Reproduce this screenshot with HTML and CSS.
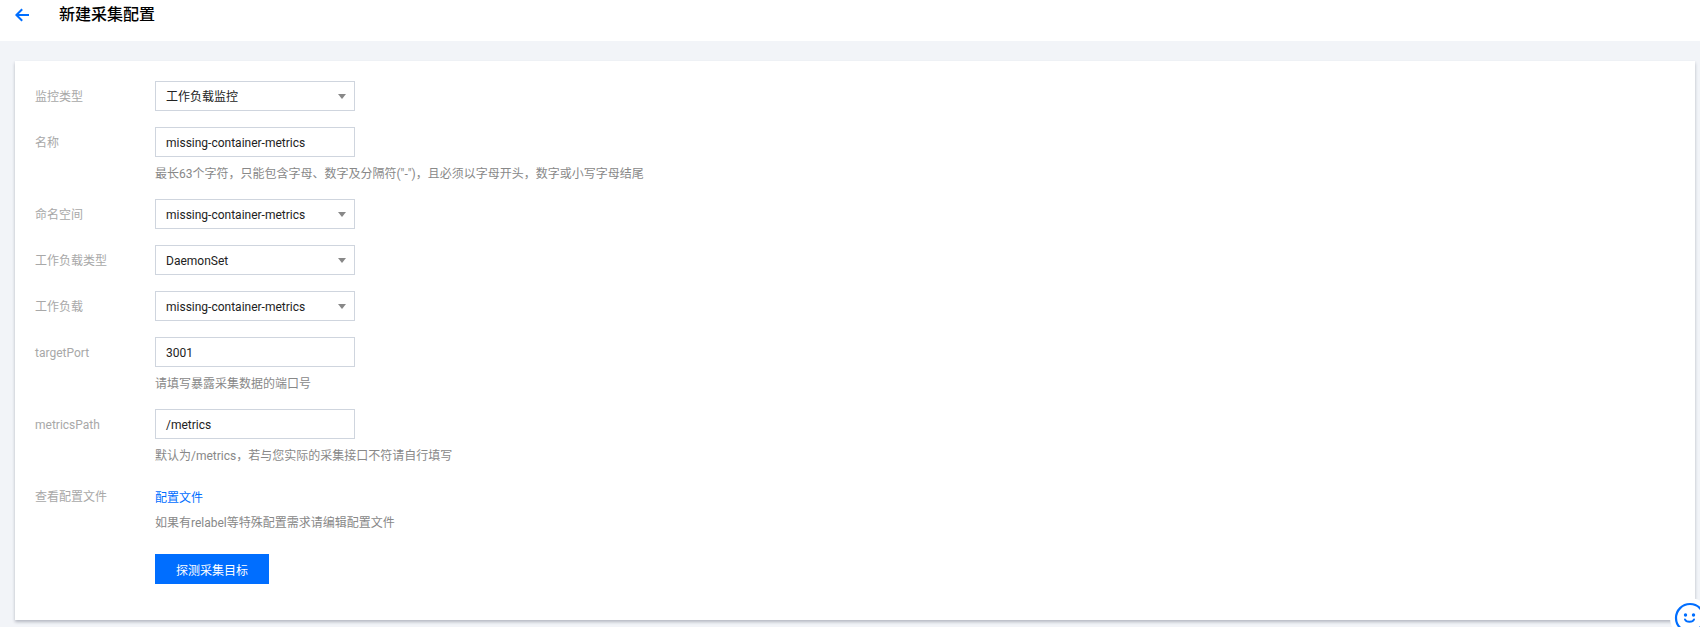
FILE: index.html
```html
<!DOCTYPE html>
<html lang="zh-CN">
<head>
<meta charset="utf-8">
<title>新建采集配置</title>
<link rel="stylesheet" href="styles.css">
</head>
<body>
<header class="topbar">
  <svg class="back" width="16" height="14" viewBox="0 0 16 14" aria-hidden="true"><path d="M14 7H1.5M7.2 1.2 1.4 7l5.8 5.8" fill="none" stroke="#006eff" stroke-width="2"/></svg>
  <h1 class="title">新建采集配置</h1>
</header>
<main class="content">
  <form class="card">
    <div class="row">
      <label class="label">监控类型</label>
      <div class="field"><div class="control select">工作负载监控<i class="caret"></i></div></div>
    </div>
    <div class="row">
      <label class="label">名称</label>
      <div class="field">
        <div class="control">missing-container-metrics</div>
        <p class="help">最长63个字符，只能包含字母、数字及分隔符("-")，且必须以字母开头，数字或小写字母结尾</p>
      </div>
    </div>
    <div class="row">
      <label class="label">命名空间</label>
      <div class="field"><div class="control select">missing-container-metrics<i class="caret"></i></div></div>
    </div>
    <div class="row">
      <label class="label">工作负载类型</label>
      <div class="field"><div class="control select">DaemonSet<i class="caret"></i></div></div>
    </div>
    <div class="row">
      <label class="label">工作负载</label>
      <div class="field"><div class="control select">missing-container-metrics<i class="caret"></i></div></div>
    </div>
    <div class="row">
      <label class="label">targetPort</label>
      <div class="field">
        <div class="control">3001</div>
        <p class="help">请填写暴露采集数据的端口号</p>
      </div>
    </div>
    <div class="row">
      <label class="label">metricsPath</label>
      <div class="field">
        <div class="control">/metrics</div>
        <p class="help">默认为/metrics，若与您实际的采集接口不符请自行填写</p>
      </div>
    </div>
    <div class="row">
      <label class="label">查看配置文件</label>
      <div class="field">
        <a class="link" href="#">配置文件</a>
        <p class="help help-tight">如果有relabel等特殊配置需求请编辑配置文件</p>
      </div>
    </div>
    <div class="row row-action">
      <span class="label"></span>
      <div class="field"><button class="btn" type="button">探测采集目标</button></div>
    </div>
  </form>
</main>
<div class="feedback">
  <svg width="32" height="32" viewBox="0 0 32 32" aria-hidden="true">
    <circle cx="16" cy="16" r="14" fill="#fff" stroke="#006eff" stroke-width="2.2"/>
    <circle cx="11.5" cy="13" r="1.7" fill="#006eff"/>
    <circle cx="19.5" cy="13" r="1.7" fill="#006eff"/>
    <path d="M11 17.5c1.2 3 7.8 3 9 0" fill="none" stroke="#006eff" stroke-width="2" stroke-linecap="round"/>
  </svg>
</div>
</body>
</html>
```
FILE: styles.css
```css
* { box-sizing: border-box; }
html, body { height: 100%; }
body {
  margin: 0;
  overflow: hidden;
  background: #f2f4f8;
  font-family: Roboto, "Noto Sans CJK SC", sans-serif;
  font-size: 12px;
  color: #000;
}
.topbar {
  display: flex;
  align-items: flex-start;
  height: 41px;
  padding: 8px 0 0 15px;
  background: #fff;
}
.back { flex: none; display: block; }
.title {
  margin: -5px 0 0 28px;
  font-size: 16px;
  font-weight: 500;
  line-height: 24px;
}
.content { padding: 20px 5px 0 15px; }
.card {
  display: flex;
  flex-direction: column;
  gap: 16px;
  padding: 20px 20px 36px;
  background: #fff;
  box-shadow: 0 2px 3px 0 rgba(54, 58, 80, .32);
}
.row { display: flex; }
.row-action { margin-top: 7px; }
.label {
  flex: none;
  width: 120px;
  height: 30px;
  padding-top: 1px;
  line-height: 30px;
  color: #a8a8a8;
}
.field { flex: 1; }
.control {
  position: relative;
  width: 200px;
  height: 30px;
  padding: 1px 10px 0;
  border: 1px solid #cfd5de;
  line-height: 28px;
  color: #222;
  background: #fff;
}
.caret {
  position: absolute;
  top: 12px;
  right: 8px;
  border-style: solid;
  border-width: 5px 4px 0;
  border-color: #888 transparent transparent;
}
.help {
  margin: 7px 0 -1px;
  line-height: 20px;
  color: #888;
}
.help-tight { margin: 0 0 -2px; }
.link {
  display: block;
  margin-top: 2px;
  line-height: 30px;
  color: #006eff;
  text-decoration: none;
}
.btn {
  display: block;
  width: 114px;
  height: 30px;
  padding: 0;
  border: 0;
  background: #006eff;
  color: #fff;
  font: inherit;
}
.feedback {
  position: fixed;
  left: 1670px;
  top: 598px;
  width: 40px;
  height: 40px;
  padding: 4px;
  border-radius: 50%;
  background: #fff;
}
```
